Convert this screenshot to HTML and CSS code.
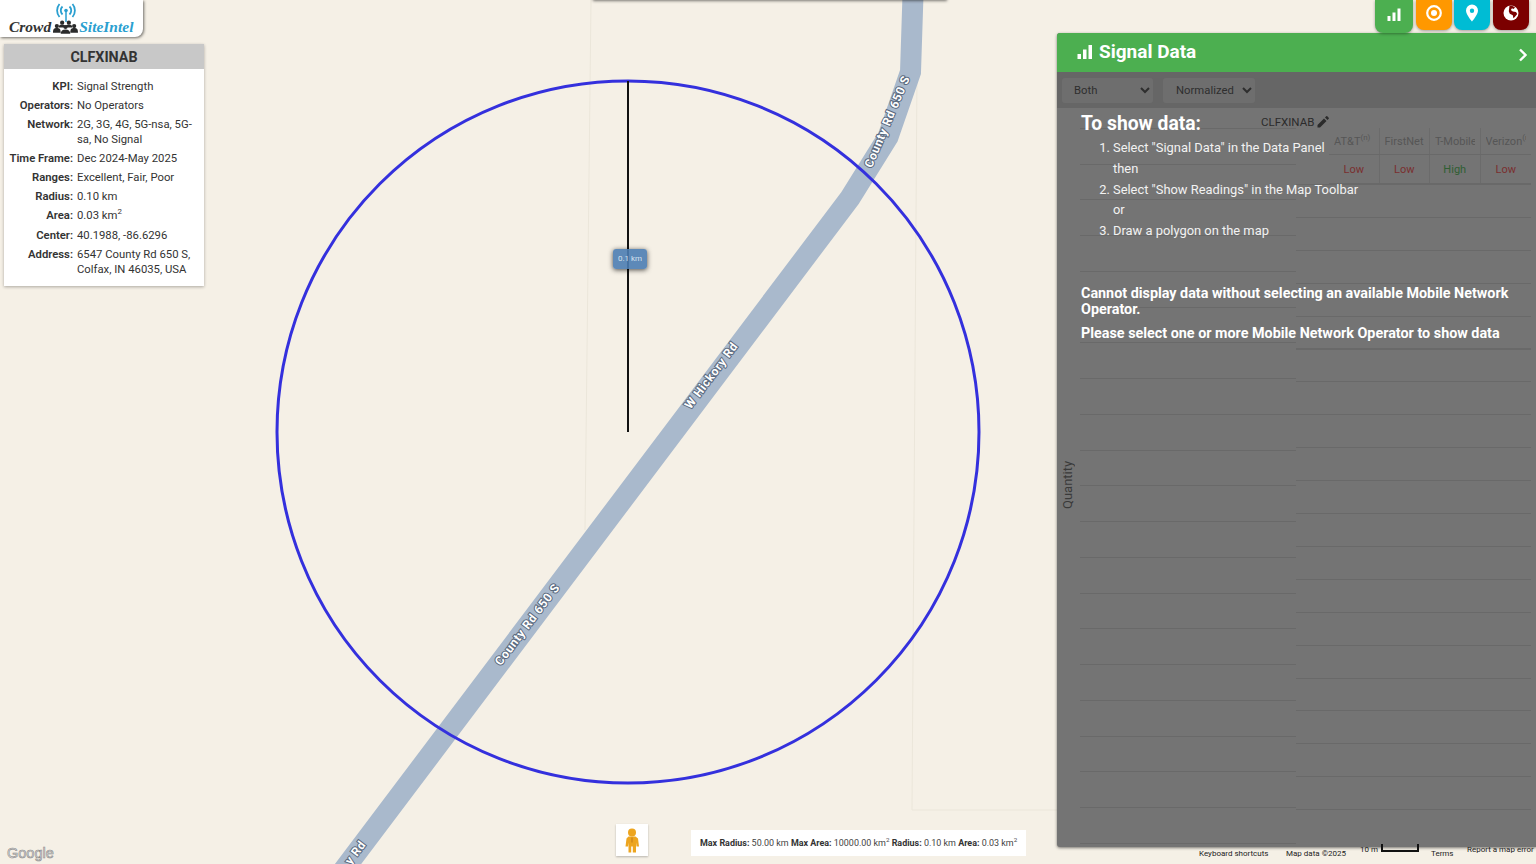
FILE: index.html
```html
<!DOCTYPE html>
<html>
<head>
    <link rel="stylesheet" href="styles.css">
</head>
<body>
    <div class="map">
        <svg class="map-canvas" width="1536" height="864" viewBox="0 0 1536 864">
            <polyline class="faint" points="591,0 585,530"/>
            <polyline class="faint" points="917,70 912,810 1057,810"/>
            <polyline class="road" points="913,-5 910.5,72 888,137 850,198 336,880"/>
            <text class="road-label" transform="translate(888,122) rotate(-67)">County Rd 650 S</text>
            <text class="road-label" transform="translate(712,376) rotate(-53)">W Hickory Rd</text>
            <text class="road-label" transform="translate(528,625) rotate(-53)">County Rd 650 S</text>
            <text class="road-label" transform="translate(356,853) rotate(-53)">y Rd</text>
            <circle class="radius-circle" cx="628" cy="432" r="351"/>
            <line class="radius-line" x1="628" y1="81" x2="628" y2="432"/>
        </svg>

        <div class="top-sheet"></div>
        <div class="radius-tag">0.1 km</div>

        <div class="logo">
            <svg class="logo-wave" width="22" height="19" viewBox="0 0 22 19">
                <circle cx="11" cy="7.500" r="1.800" fill="#2a9fd0"/>
                <path d="M11 8v11" stroke="#2a9fd0" stroke-width="1.500"/>
                <path d="M7.500 3.500a5.500 5.500 0 0 0 0 8M14.500 3.500a5.500 5.500 0 0 1 0 8M4.500 1a10 10 0 0 0 0 13M17.500 1a10 10 0 0 1 0 13" fill="none" stroke="#2a9fd0" stroke-width="1.800"/>
            </svg>
            <div class="logo-line">
                <span class="logo-crowd">Crowd</span>
                <svg class="logo-people" width="25" height="14" viewBox="0 0 26 14" fill="#2b2b2b">
                    <circle cx="4" cy="6" r="2.200"/><circle cx="9.500" cy="2.500" r="2.200"/><circle cx="16.500" cy="2.500" r="2.200"/><circle cx="22" cy="6" r="2.200"/><circle cx="13" cy="7" r="2.200"/>
                    <path d="M0 13c0-4 1-5 4-5s4 1 4 5zM18 13c0-4 1-5 4-5s4 1 4 5zM8 14c0-3 2-4.500 5-4.500s5 1.500 5 4.500zM6 7.500c0-2 1-3 3.500-3s3.500 1 3.500 3zM13 7.500c0-2 1-3 3.500-3s3.500 1 3.500 3z"/>
                </svg>
                <span class="logo-site">SiteIntel</span>
            </div>
        </div>

        <div class="info-card">
            <div class="info-title">CLFXINAB</div>
            <div class="info-rows">
                <div class="info-row"><b>KPI:</b><span>Signal Strength</span></div>
                <div class="info-row"><b>Operators:</b><span>No Operators</span></div>
                <div class="info-row"><b>Network:</b><span>2G, 3G, 4G, 5G-nsa, 5G-sa, No Signal</span></div>
                <div class="info-row"><b>Time Frame:</b><span>Dec 2024-May 2025</span></div>
                <div class="info-row"><b>Ranges:</b><span>Excellent, Fair, Poor</span></div>
                <div class="info-row"><b>Radius:</b><span>0.10 km</span></div>
                <div class="info-row"><b>Area:</b><span>0.03 km<sup>2</sup></span></div>
                <div class="info-row"><b>Center:</b><span>40.1988, -86.6296</span></div>
                <div class="info-row"><b>Address:</b><span>6547 County Rd 650 S, Colfax, IN 46035, USA</span></div>
            </div>
        </div>

        <div class="toolbar">
            <div class="tool tool-green">
                <svg width="14" height="14" viewBox="0 0 14 14" fill="#fff"><rect x="0.500" y="8" width="3" height="5"/><rect x="5.500" y="4.500" width="3" height="8.500"/><rect x="10.500" y="0.500" width="3" height="12.500"/></svg>
            </div>
            <div class="tool tool-orange">
                <svg width="18" height="18" viewBox="0 0 18 18"><circle cx="9" cy="9" r="6.800" fill="none" stroke="#fff" stroke-width="2.200"/><circle cx="9" cy="9" r="3" fill="#fff"/></svg>
            </div>
            <div class="tool tool-cyan">
                <svg width="14" height="18" viewBox="0 0 14 18"><path fill="#fff" fill-rule="evenodd" d="M7 0.500a6 6 0 0 0-6 6c0 4.200 6 11 6 11s6-6.800 6-11a6 6 0 0 0-6-6zm0 4a2.200 2.200 0 1 1 0 4.400 2.200 2.200 0 0 1 0-4.400z"/></svg>
            </div>
            <div class="tool tool-red">
                <svg width="16" height="16" viewBox="0 0 16 16"><circle cx="8" cy="8" r="7.500" fill="#fff"/><path fill="#7b0000" d="M6.500 0.800c2-.3 4.200.3 5.500 1.700L10.500 4 9 3.200 7.800 5l2 1.500 3.200.4 1.200 2-2.400 3-1.400 1.400-.6-3-3-1.500-1-2.500z"/></svg>
            </div>
        </div>

        <div class="data-panel">
            <div class="panel-head">
                <svg width="16" height="16" viewBox="0 0 16 16" fill="#fff"><rect x="0.500" y="10" width="3.500" height="5"/><rect x="6" y="5.500" width="3.500" height="9.500"/><rect x="11.500" y="1" width="3.500" height="14"/></svg>
                <span class="panel-title">Signal Data</span>
                <svg class="panel-close" width="10" height="14" viewBox="0 0 10 14"><path d="M2 1.500 7.500 7 2 12.500" fill="none" stroke="#fff" stroke-width="2.400"/></svg>
            </div>
            <div class="panel-controls">
                <select class="panel-select select-both"><option>Both</option></select>
                <select class="panel-select select-norm"><option>Normalized</option></select>
            </div>
            <div class="panel-body">
                <div class="grid-left"></div>
                <div class="grid-right"></div>
                <div class="quantity">Quantity</div>
                <div class="site-name">CLFXINAB
                    <svg width="12" height="12" viewBox="0 0 12 12" fill="#2b2b2b"><path d="M0.500 11.500V9l6.500-6.500 2.500 2.500L3 11.500zM8 1.500 9.200 0.300a.8.800 0 0 1 1.100 0l1.400 1.400a.8.800 0 0 1 0 1.100L10.500 4z"/></svg>
                </div>
                <div class="op-table">
                    <div class="op-cell op-head"><span>AT&amp;T<sup>(n)</sup></span></div>
                    <div class="op-cell op-head"><span>FirstNet</span></div>
                    <div class="op-cell op-head"><span>T-Mobile</span></div>
                    <div class="op-cell op-head"><span>Verizon<sup>(n)</sup></span></div>
                    <div class="op-cell op-low">Low</div>
                    <div class="op-cell op-low">Low</div>
                    <div class="op-cell op-high">High</div>
                    <div class="op-cell op-low">Low</div>
                </div>
                <div class="message">
                    <h2>To show data:</h2>
                    <ol>
                        <li>Select "Signal Data" in the Data Panel<div>then</div></li>
                        <li>Select "Show Readings" in the Map Toolbar<div>or</div></li>
                        <li>Draw a polygon on the map</li>
                    </ol>
                    <p class="warn-first">Cannot display data without selecting an available Mobile Network Operator.</p>
                    <p>Please select one or more Mobile Network Operator to show data</p>
                </div>
            </div>
        </div>

        <div class="pegman">
            <svg width="16" height="25" viewBox="0 0 16 25"><circle cx="8" cy="4.500" r="4" fill="#eda51f"/><path fill="#eda51f" d="M4.500 8.500h7l2.500 2 1 8h-2.500l-.5-4v10H8.800v-6H7.200v6H4.500v-10l-.5 4H1.500l1-8z"/><path d="M8 9.500v5" stroke="#c9801a" stroke-width="1.200"/></svg>
        </div>
        <div class="limits">
            <b>Max Radius:</b> 50.00 km <b>Max Area:</b> 10000.00 km<sup>2</sup> <b>Radius:</b> 0.10 km <b>Area:</b> 0.03 km<sup>2</sup>
        </div>
        <div class="google">Google</div>
        <div class="map-foot">
            <span class="foot-keys">Keyboard shortcuts</span>
            <span class="foot-data">Map data ©2025</span>
            <span class="foot-scale">10 m<i class="scale-bar"></i></span>
            <span class="foot-terms">Terms</span>
            <span class="foot-error">Report a map error</span>
        </div>
    </div>
</body>
</html>
```

FILE: styles.css
```css
* {
    box-sizing: border-box;
}
html, body {
    margin: 0;
    height: 100%;
    overflow: hidden;
}
body {
    font-family: Roboto, "Liberation Sans", sans-serif;
    color: #333;
}
.map {
    position: relative;
    width: 1536px;
    height: 864px;
    overflow: hidden;
    background: #f5f0e6;
}
.map-canvas {
    position: absolute;
    left: 0;
    top: 0;
}
.faint {
    fill: none;
    stroke: #ebe6da;
    stroke-width: 1;
}
.road {
    fill: none;
    stroke: #a9b9cc;
    stroke-width: 21;
    stroke-linejoin: miter;
}
.road-label {
    font-size: 12px;
    font-weight: 700;
    letter-spacing: 0.6px;
    text-anchor: middle;
    dominant-baseline: middle;
    fill: #fff;
    stroke: #5a697e;
    stroke-width: 2px;
    paint-order: stroke;
}
.radius-circle {
    fill: none;
    stroke: #3430dd;
    stroke-width: 3;
}
.radius-line {
    stroke: #111;
    stroke-width: 2;
}
.top-sheet {
    position: absolute;
    left: 593px;
    top: -10px;
    width: 354px;
    height: 10px;
    box-shadow: 0 1px 3px rgba(0, 0, 0, 0.5);
}
.radius-tag {
    position: absolute;
    left: 613px;
    top: 249px;
    width: 34px;
    height: 20px;
    border-radius: 3px;
    background: rgba(76, 125, 178, 0.9);
    box-shadow: 0 1px 5px rgba(0, 0, 0, 0.7);
    color: #d5e2ef;
    font-size: 8px;
    line-height: 20px;
    text-align: center;
}
.logo {
    position: absolute;
    left: 0;
    top: 0;
    width: 143px;
    height: 37px;
    padding: 3px 0 0 9px;
    background: #fff;
    border-bottom-right-radius: 8px;
    box-shadow: 1px 1px 3px rgba(0, 0, 0, 0.55);
}
.logo-wave {
    display: block;
    margin-left: 46px;
}
.logo-line {
    display: flex;
    align-items: center;
    margin-top: -3px;
    font-family: "Liberation Serif", serif;
    font-style: italic;
    font-weight: bold;
    font-size: 15.500px;
    line-height: 16px;
}
.logo-people {
    margin: 0 1px 0 2px;
}
.logo-crowd {
    color: #333;
}
.logo-site {
    color: #2a9fd0;
}
.info-card {
    position: absolute;
    left: 4px;
    top: 44px;
    width: 200px;
    height: 242px;
    background: #fff;
    box-shadow: 0 1px 3px rgba(0, 0, 0, 0.3);
}
.info-title {
    height: 25px;
    background: #c8c8c8;
    font-size: 14.300px;
    font-weight: 700;
    line-height: 26px;
    text-align: center;
}
.info-rows {
    padding: 10.500px 10px 0 0;
}
.info-row {
    display: grid;
    grid-template-columns: 69px 1fr;
    column-gap: 4px;
    margin-bottom: 4.400px;
    font-size: 11.300px;
    line-height: 14.800px;
}
.info-row b {
    font-weight: 600;
    text-align: right;
    white-space: nowrap;
}
.info-row sup, .limits sup {
    font-size: 0.7em;
    line-height: 0;
}
.toolbar {
    position: absolute;
    right: 7px;
    top: 0;
    display: flex;
    align-items: flex-start;
    gap: 2.670px;
}
.tool {
    display: flex;
    align-items: center;
    justify-content: center;
    width: 36px;
    height: 30px;
    padding-bottom: 4px;
    border-radius: 0 0 8px 8px;
    box-shadow: 0 1px 3px rgba(0, 0, 0, 0.35);
}
.tool-green {
    width: 38px;
    height: 33px;
    background: #4caf50;
    z-index: 2;
}
.tool-orange {
    background: #ff9800;
}
.tool-cyan {
    background: #00bcd4;
}
.tool-red {
    background: #7b0000;
}
.data-panel {
    position: absolute;
    left: 1057px;
    top: 33px;
    width: 479px;
    height: 814px;
    display: flex;
    flex-direction: column;
    border-radius: 3px 0 0 3px;
    background: #747474;
    box-shadow: 0 1px 3px rgba(0, 0, 0, 0.5);
    overflow: hidden;
}
.panel-head {
    display: flex;
    align-items: center;
    gap: 6px;
    height: 39px;
    padding: 0 8px 2px 20px;
    background: #4caf50;
    color: #fff;
}
.panel-title {
    font-size: 19px;
    font-weight: 700;
}
.panel-close {
    margin-left: auto;
    margin-top: 7px;
}
.panel-controls {
    display: flex;
    gap: 10px;
    height: 36px;
    padding: 6px 0 0 5px;
    background: #666;
}
.panel-select {
    height: 25px;
    padding-left: 8px;
    border: none;
    border-radius: 3px;
    background: #6e6e6e;
    color: #2e2e2e;
    font-family: Roboto, sans-serif;
    font-size: 11.300px;
}
.select-both {
    width: 91px;
}
.select-norm {
    width: 92px;
    padding-left: 9px;
}
.panel-body {
    position: relative;
    flex: 1;
}
.grid-left {
    position: absolute;
    left: 23px;
    top: 0;
    width: 216px;
    height: 736px;
    background: repeating-linear-gradient(to bottom, transparent 0, transparent 20px, #696969 20px, #696969 21px, transparent 21px, transparent 35.750px);
}
.grid-right {
    position: absolute;
    left: 239px;
    top: 76px;
    width: 235px;
    height: 630px;
    background: repeating-linear-gradient(to bottom, #696969 0, #696969 1px, transparent 1px, transparent 32.900px);
}
.quantity {
    position: absolute;
    left: 3px;
    top: 353px;
    height: 48px;
    writing-mode: vertical-rl;
    transform: rotate(180deg);
    font-size: 13px;
    line-height: 15px;
    text-align: center;
    color: #3a3a3a;
}
.site-name {
    position: absolute;
    left: 204px;
    top: 7px;
    display: flex;
    align-items: center;
    gap: 3px;
    font-size: 11.500px;
    line-height: 14px;
    color: #2b2b2b;
}
.op-table {
    position: absolute;
    left: 272px;
    top: 20px;
    width: 202px;
    display: grid;
    grid-template-columns: repeat(4, minmax(0, 1fr));
    grid-template-rows: 27px 29px;
}
.op-cell {
    border-right: 1px solid #6b6b6b;
    border-bottom: 1px solid #696969;
    font-size: 11px;
    text-align: center;
    line-height: 29px;
}
.op-cell:nth-child(4n) {
    border-right: none;
}
.op-cell sup {
    font-size: 8px;
    line-height: 0;
}
.op-head {
    color: #565656;
    line-height: 27px;
}
.op-head span {
    display: block;
    margin: 0 5px;
    overflow: hidden;
    white-space: nowrap;
    text-align: left;
}
.op-low {
    color: #7a2f2f;
}
.op-high {
    color: #2f5f33;
}
.message {
    position: relative;
    padding: 4px 24px 0;
    color: #f2f2f2;
}
.message h2 {
    margin: 0;
    font-size: 19.300px;
    font-weight: 700;
    line-height: 24px;
    color: #fff;
}
.message ol {
    margin: 2px 0 0;
    padding-left: 32px;
    font-size: 12.900px;
    line-height: 20.800px;
}
.message p {
    margin: 8px 0 0;
    font-size: 14.350px;
    font-weight: 700;
    line-height: 16px;
    color: #fff;
}
.message .warn-first {
    margin-top: 44px;
}
.pegman {
    position: absolute;
    left: 616px;
    top: 824px;
    width: 32px;
    height: 32px;
    display: flex;
    align-items: center;
    justify-content: center;
    background: #fff;
    box-shadow: 0 1px 2px rgba(0, 0, 0, 0.25);
}
.limits {
    position: absolute;
    left: 691px;
    top: 830px;
    width: 335px;
    height: 26px;
    padding-left: 9px;
    background: #fff;
    font-size: 8.950px;
    line-height: 26px;
    white-space: nowrap;
    color: #444;
}
.limits b {
    font-weight: 700;
    color: #333;
}
.google {
    position: absolute;
    left: 7px;
    top: 844px;
    font-family: "Liberation Sans", sans-serif;
    font-size: 14.500px;
    line-height: 18px;
    color: #e4e4e4;
    -webkit-text-stroke: 0.6px #8a8a8a;
}
.map-foot span {
    position: absolute;
    font-size: 8px;
    line-height: 10px;
    white-space: nowrap;
    color: #222;
}
.foot-keys {
    left: 1199px;
    top: 849px;
}
.foot-data {
    left: 1286px;
    top: 849px;
}
.foot-scale {
    left: 1360px;
    top: 845px;
    display: flex;
    align-items: flex-start;
    gap: 3px;
}
.scale-bar {
    display: block;
    width: 38px;
    height: 8px;
    margin-top: -1px;
    border: 2px solid #111;
    border-top: none;
}
.foot-terms {
    left: 1431px;
    top: 849px;
}
.foot-error {
    left: 1467px;
    top: 845px;
}
```
